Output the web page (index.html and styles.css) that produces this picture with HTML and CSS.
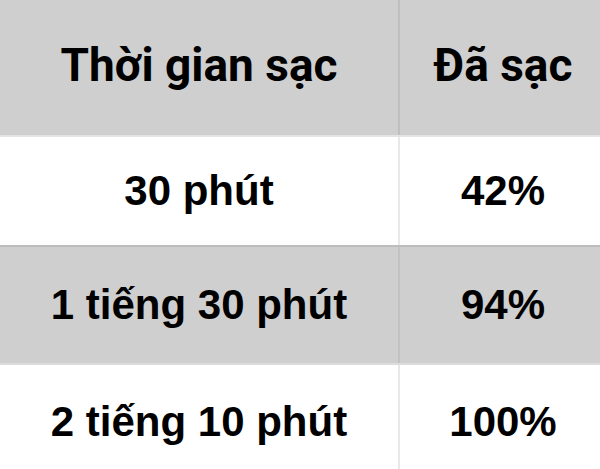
FILE: index.html
```html
<!DOCTYPE html>
<html lang="vi">
<head>
<meta charset="utf-8">
<link rel="stylesheet" href="styles.css">
</head>
<body>
<div class="table">
  <div class="row head">
    <div class="cell c1">Thời gian sạc</div>
    <div class="cell c2">Đã sạc</div>
  </div>
  <div class="row white r2">
    <div class="cell c1">30 phút</div>
    <div class="cell c2">42%</div>
  </div>
  <div class="row gray r3">
    <div class="cell c1">1 tiếng 30 phút</div>
    <div class="cell c2">94%</div>
  </div>
  <div class="row white r4">
    <div class="cell c1">2 tiếng 10 phút</div>
    <div class="cell c2">100%</div>
  </div>
</div>
</body>
</html>
```
FILE: styles.css
```css
html, body {
  margin: 0;
  padding: 0;
  background: #ffffff;
}
.table {
  width: 600px;
  height: 469px;
  display: flex;
  flex-direction: column;
  overflow: hidden;
}
.row {
  display: grid;
  grid-template-columns: 398px 1fr;
  column-gap: 2px;
  color: #000;
  font-family: "Liberation Sans", Arial, sans-serif;
  font-weight: bold;
  font-size: 42px;
}
.cell {
  display: flex;
  align-items: center;
  justify-content: center;
}
.head {
  height: 135px;
  background: #bfbfbf;
  border-bottom: 2px solid #e4e4e4;
  font-family: Roboto, "Liberation Sans", sans-serif;
  font-size: 46px;
}
.head .cell { background: #cfcfcf; padding-bottom: 6px; }
.white { background: #e8e8e8; }
.white .cell { background: #ffffff; }
.gray { background: #c2c2c2; }
.gray .cell { background: #cfcfcf; }
.r2 { height: 108px; border-bottom: 2px solid #bdbdbd; }
.r3 { height: 116px; border-bottom: 2px solid #dcdcdc; }
.r4 { height: 104px; }
.r4 .cell { padding-top: 10px; }
.c2 { padding-left: 6px; }
```
